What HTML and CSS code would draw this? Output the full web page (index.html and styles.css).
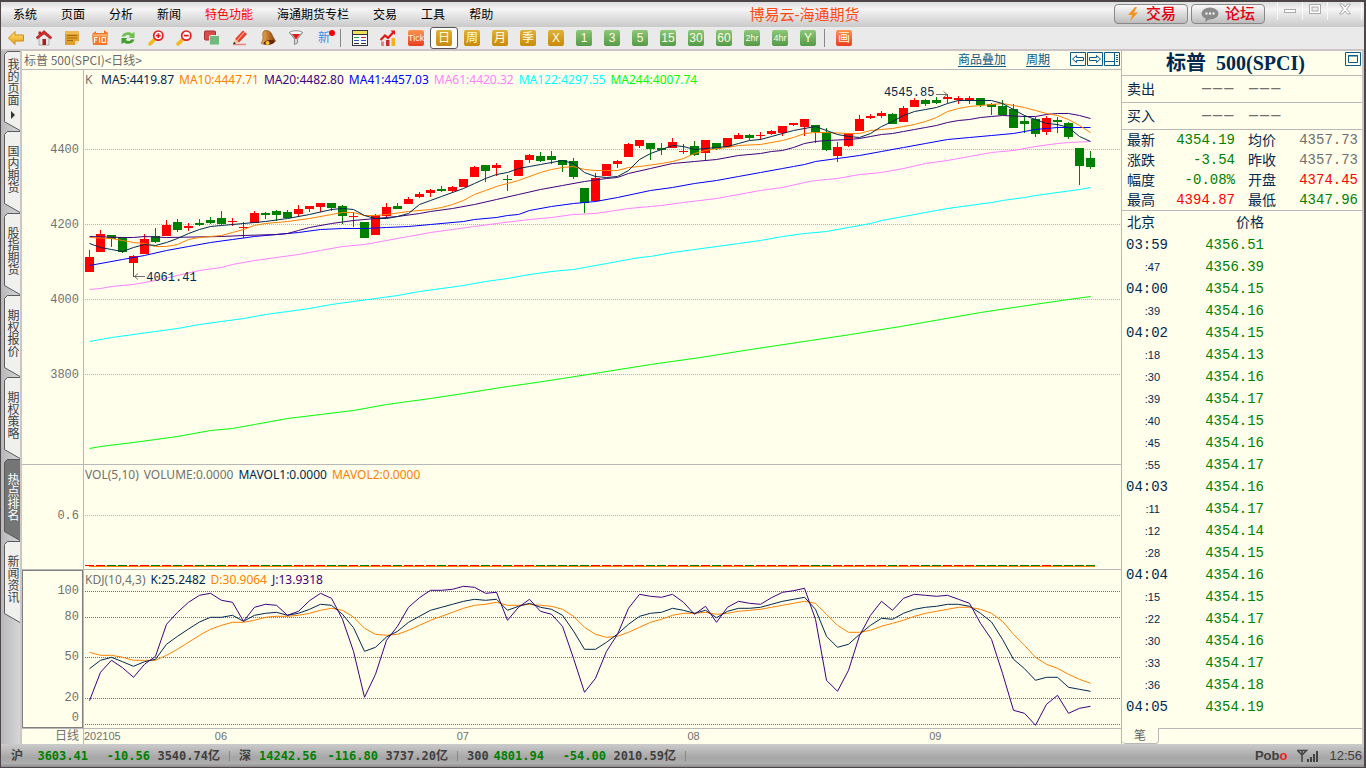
FILE: index.html
```html
<!DOCTYPE html>
<html lang="zh-CN">
<head>
<meta charset="utf-8">
<title>博易云-海通期货</title>
<link rel="stylesheet" href="styles.css">
</head>
<body>
<svg class="defs" aria-hidden="true">
  <defs>
    <linearGradient id="gold" x2="0" y2="1"><stop offset="0" stop-color="#ffe27a"/><stop offset="1" stop-color="#e8a010"/></linearGradient>
    <linearGradient id="bell" x2="1" y2="0"><stop offset="0" stop-color="#f0b050"/><stop offset="1" stop-color="#8a3c08"/></linearGradient>
    <symbol id="tab" viewBox="0 0 17 82" preserveAspectRatio="none">
      <path d="M17 .5H3.500L.5 3.500V72.500L17 81.500"/>
    </symbol>
  </defs>
</svg>

<header class="titlebar">
  <nav class="menu">
    <button>系统</button><button>页面</button><button>分析</button><button>新闻</button><button class="hot">特色功能</button><button>海通期货专栏</button><button>交易</button><button>工具</button><button>帮助</button>
  </nav>
  <h1 class="app-name">博易云-海通期货</h1>
  <div class="title-right">
    <button class="pill"><svg width="14" height="16" viewBox="0 0 14 16"><path d="M9 1L2 9h4l-2 6 8-8.500H8L11 1z" fill="#f5941e"/></svg>交易</button>
    <button class="pill"><svg width="18" height="15" viewBox="0 0 18 15"><ellipse cx="9" cy="6.500" rx="8.500" ry="6" fill="#8a8a8a"/><path d="M5 10l-1 5 6-4z" fill="#8a8a8a"/><path d="M4.500 5.500h2v2h-2zM8 5.500h2v2H8zM11.500 5.500h2v2h-2z" fill="#fff"/></svg>论坛</button>
    <div class="window-controls">
      <button aria-label="最小化"><svg width="14" height="14" viewBox="0 0 14 14"><rect x="1.500" y="7.500" width="11" height="3" fill="#fff" stroke="#aaa"/></svg></button>
      <button aria-label="还原"><svg width="14" height="14" viewBox="0 0 14 14"><rect x="1.500" y="2.500" width="11" height="9" fill="#fff" stroke="#aaa"/><rect x="4" y="5" width="6" height="4" fill="#eee" stroke="#aaa"/></svg></button>
      <button class="close" aria-label="关闭"><svg width="14" height="14" viewBox="0 0 14 14"><path d="M1.500 2h3L7 5l2.500-3h3L8.700 7l3.800 5h-3L7 9l-2.500 3h-3l3.800-5z" fill="#fff" stroke="#aaa"/></svg></button>
    </div>
  </div>
</header>

<div class="toolbar">
  <button aria-label="后退"><svg viewBox="0 0 16 16"><path d="M.5 8L7 1.500V5h8.500v6H7v3.500z" fill="url(#gold)" stroke="#d08c10"/></svg></button>
  <button aria-label="首页"><svg viewBox="0 0 16 16"><path d="M3 7v8h10V7L8 3z" fill="#e8e8ea" stroke="#888" stroke-width=".6"/><path d="M2.500 1.500h2.500v3H2.500z" fill="#b22"/><path d="M8 .5L0 7.500l1.500 1.500L8 4l6.500 5L16 7.500z" fill="#d62828" stroke="#901515" stroke-width=".5"/><path d="M6.500 9h3.500v6H6.500z" fill="#a51d1d"/></svg></button>
  <button aria-label="公告"><svg viewBox="0 0 16 16"><path d="M1 1h14v10l-4 4H1z" fill="#e0a030"/><path d="M1 1h14v3H1z" fill="#edbb55"/><path d="M11 15v-4h4z" fill="#fbe09a"/><path d="M3 5.500h10M3 8h10M3 10.500h6" stroke="#a86c10"/></svg></button>
  <button aria-label="F10"><svg viewBox="0 0 16 16"><path d="M0 4l4-3v2h8V0l4 3-1 12H1z" fill="#f07828"/><path d="M.5 4h15v2.500H.5z" fill="#f8a868"/><path d="M2.500 13V7.500H5.500M2.500 10H5M7.500 7v6M10 7.500h3.500V12.500H10z" fill="none" stroke="#fff5dc" stroke-width="1.200"/></svg></button>
  <button aria-label="刷新"><svg viewBox="0 0 16 16"><path d="M1.500 6.500C3 2 9 1 12 3.500l2.500-1.500V8H8.500l2-2C8 4.500 5.500 4.500 5 6.500z" fill="#6cc24a"/><path d="M14.500 9.500C13 14 7 15 4 12.500L1.500 14V8h6l-2 2c2.500 1.500 5 1.500 5.500-.5z" fill="#3f9e2c"/></svg></button>
  <button aria-label="放大"><svg viewBox="0 0 16 16"><path d="M6.500 9.500L2 14" stroke="#f5b820" stroke-width="3.500" stroke-linecap="round"/><circle cx="10.300" cy="5.600" r="4.600" fill="#fff" stroke="#e02020" stroke-width="1.700"/><path d="M10.300 3.200v4.800M8 5.600h4.700" stroke="#e02020" stroke-width="1.600"/></svg></button>
  <button aria-label="缩小"><svg viewBox="0 0 16 16"><path d="M6.500 9.500L2 14" stroke="#f5b820" stroke-width="3.500" stroke-linecap="round"/><circle cx="10.300" cy="5.600" r="4.600" fill="#fff" stroke="#e02020" stroke-width="1.700"/><path d="M8 5.600h4.700" stroke="#e02020" stroke-width="1.800"/></svg></button>
  <button aria-label="叠加"><svg viewBox="0 0 16 16"><rect x=".5" y="1" width="11" height="9" rx="1" fill="#d94a4a" stroke="#a83030"/><rect x="5.500" y="5.500" width="10" height="9.500" rx="1" fill="#74b77c" stroke="#e0f0e0"/></svg></button>
  <button aria-label="画线"><svg viewBox="0 0 16 16"><path d="M1 14.500h13" stroke="#f08080" stroke-width="1.500"/><path d="M11 .5l4 3.500-8 8.500-4-3.500z" fill="#e83a24"/><path d="M12.500 2L5 10.500" stroke="#ff9a80" stroke-width="1.300"/><path d="M3 9l4 3.500L1 14.500z" fill="#f0c898"/><path d="M2 11.700L1 14.500l3-.9z" fill="#333"/></svg></button>
  <button aria-label="预警"><svg viewBox="0 0 16 16"><path d="M4 1c6-2 8 3 9 6l2.500 4c-3 4-9 4.500-14 2.500C.5 12.500 3 11 3 8.500S2 2.500 4 1z" fill="url(#bell)" stroke="#804010" stroke-width=".6"/><ellipse cx="9" cy="12.300" rx="5.500" ry="2.200" transform="rotate(-10 9 12.300)" fill="#5e2806"/><circle cx="7.500" cy="13" r="2" fill="#ffc030"/></svg></button>
  <button aria-label="筛选"><svg viewBox="0 0 16 16"><path d="M1.500 2.500L6.500 9v5.500l3-1.500V9l5-6.500z" fill="#d8d8da" stroke="#8a8a8a"/><ellipse cx="8" cy="2.800" rx="6.500" ry="2" fill="#fff" stroke="#888"/><path d="M4 4h8L8.500 9h-1z" fill="#e02020"/></svg></button>
  <button class="new-item">新<i class="dot"></i></button>
  <span class="sep"></span>
  <button aria-label="报价表"><svg viewBox="0 0 16 16"><rect x=".5" y=".5" width="15" height="15" fill="#fff" stroke="#333"/><path d="M1 1h14v3H1z" fill="#f2e058"/><path d="M0 4.500h16" stroke="#333"/><path d="M2 7.500h5" stroke="#20a040"/><path d="M9 7.500h5" stroke="#e02020"/><path d="M2 10.500h5M9 10.500h5" stroke="#2a50c8"/><path d="M2 13.500h5M9 13.500h5" stroke="#333"/></svg></button>
  <button aria-label="分时走势"><svg viewBox="0 0 16 16"><path d="M1 11.500h3V16H1z" fill="#f08080"/><path d="M6 10h3.500v6H6z" fill="#c03030"/><path d="M11.500 8H15v8h-3.500z" fill="#f5b020"/><path d="M.5 10L5 5.500l3 2.500L14 1.500" stroke="#e01818" stroke-width="2.200" fill="none"/><path d="M10.500.5H15v4.500z" fill="#e01818"/></svg></button>
  <button><span class="chip red narrow">Tick</span></button>
  <button class="selected"><span class="chip gold">日</span></button>
  <button><span class="chip gold">周</span></button>
  <button><span class="chip gold">月</span></button>
  <button><span class="chip gold">季</span></button>
  <button><span class="chip gold">X</span></button>
  <button><span class="chip green">1</span></button>
  <button><span class="chip green">3</span></button>
  <button><span class="chip green">5</span></button>
  <button><span class="chip green">15</span></button>
  <button><span class="chip green">30</span></button>
  <button><span class="chip green">60</span></button>
  <button><span class="chip green narrow">2hr</span></button>
  <button><span class="chip green narrow">4hr</span></button>
  <button><span class="chip green">Y</span></button>
  <span class="sep"></span>
  <button><span class="chip red">画</span></button>
</div>

<main class="workspace">
  <nav class="side-tabs">
    <button class="side-tab"><svg><use href="#tab"/></svg><span>我的页面</span><i class="more"></i></button>
    <button class="side-tab"><svg><use href="#tab"/></svg><span>国内期货</span></button>
    <button class="side-tab"><svg><use href="#tab"/></svg><span>股指期货</span></button>
    <button class="side-tab"><svg><use href="#tab"/></svg><span>期权报价</span></button>
    <button class="side-tab"><svg><use href="#tab"/></svg><span>期权策略</span></button>
    <button class="side-tab active"><svg><use href="#tab"/></svg><span>热点排名</span></button>
    <button class="side-tab"><svg><use href="#tab"/></svg><span>新闻资讯</span></button>
  </nav>

  <section class="chart">
    <div class="chart-head">
      <span class="chart-title">标普 500(SPCI)&lt;日线&gt;</span>
      <a href="#overlay">商品叠加</a>
      <a href="#period">周期</a>
      <div class="head-icons">
        <button aria-label="左移"><svg viewBox="0 0 16 14"><path d="M.5.5h15v13H.5z"/><path d="M2.500 7L6.500 3.500V5.500H13.500V8.500H6.500V10.500z"/></svg></button>
        <button aria-label="右移"><svg viewBox="0 0 16 14"><path d="M.5.5h15v13H.5z"/><path d="M13.500 7L9.500 3.500V5.500H2.500V8.500H9.500V10.500z"/></svg></button>
        <button aria-label="布局"><svg viewBox="0 0 16 14"><path d="M.5.5h15v13H.5zM10.500 1v12M1 9.500h9M12 3.500h2M12 5.500h2M12 7.500h2M12 9.500h2"/></svg></button>
      </div>
    </div>

    <div class="panel">
      <div class="axis price-axis"><span>4400</span><span>4200</span><span>4000</span><span>3800</span></div>
      <div class="plot">
        <svg id="price" viewBox="84 70 1037 394" preserveAspectRatio="none"></svg>
        <div class="legend price-legend"><span class="c-gray">K</span><span class="c-navy">MA5:4419.87</span><span class="c-orange">MA10:4447.71</span><span class="c-purple">MA20:4482.80</span><span class="c-blue">MA41:4457.03</span><span class="c-pink">MA61:4420.32</span><span class="c-cyan">MA122:4297.55</span><span class="c-lime">MA244:4007.74</span></div>
        <span class="mark low">4061.41</span>
        <span class="mark high">4545.85</span>
      </div>
    </div>

    <div class="panel">
      <div class="axis vol-axis"><span>0.6</span></div>
      <div class="plot">
        <svg id="volume" viewBox="84 465 1037 104" preserveAspectRatio="none"></svg>
        <div class="legend"><span class="c-gray">VOL(5,10)</span><span class="c-gray">VOLUME:0.0000</span><span class="c-navy">MAVOL1:0.0000</span><span class="c-orange">MAVOL2:0.0000</span></div>
      </div>
    </div>

    <div class="panel">
      <div class="axis kdj-axis"><span>100</span><span>80</span><span>50</span><span>20</span><span>0</span></div>
      <div class="plot">
        <svg id="kdj" viewBox="84 570 1037 158" preserveAspectRatio="none"></svg>
        <div class="legend"><span class="c-gray">KDJ(10,4,3)</span><span class="c-navy">K:25.2482</span><span class="c-orange">D:30.9064</span><span class="c-purple">J:13.9318</span></div>
      </div>
    </div>

    <div class="time-axis">
      <span class="period">日线</span>
      <div class="months"><span>202105</span><span>06</span><span>07</span><span>08</span><span>09</span></div>
    </div>
  </section>

  <aside class="quote">
    <div class="quote-title"><h2>标普 &nbsp;500(SPCI)</h2><button aria-label="最大化"><svg viewBox="0 0 16 14"><path d="M.5.5h15v13H.5zM3.500 3.500h9v7h-9zM3 4h10"/></svg></button></div>
    <div class="bid"><span>卖出</span><span class="dash">−−−</span><span class="dash">−−−</span></div>
    <div class="bid"><span>买入</span><span class="dash">−−−</span><span class="dash">−−−</span></div>
    <dl class="stats">
      <dt>最新</dt><dd class="down">4354.19</dd><dt>均价</dt><dd class="flat">4357.73</dd>
      <dt>涨跌</dt><dd class="down">-3.54</dd><dt>昨收</dt><dd class="flat">4357.73</dd>
      <dt>幅度</dt><dd class="down">-0.08%</dd><dt>开盘</dt><dd class="up">4374.45</dd>
      <dt>最高</dt><dd class="up">4394.87</dd><dt>最低</dt><dd class="down">4347.96</dd>
    </dl>
    <table class="ticks">
      <thead><tr><th>北京</th><th>价格</th></tr></thead>
      <tbody>
        <tr><td>03:59</td><td>4356.51</td></tr>
        <tr><td class="s">:47</td><td>4356.39</td></tr>
        <tr><td>04:00</td><td>4354.15</td></tr>
        <tr><td class="s">:39</td><td>4354.16</td></tr>
        <tr><td>04:02</td><td>4354.15</td></tr>
        <tr><td class="s">:18</td><td>4354.13</td></tr>
        <tr><td class="s">:30</td><td>4354.16</td></tr>
        <tr><td class="s">:39</td><td>4354.17</td></tr>
        <tr><td class="s">:40</td><td>4354.15</td></tr>
        <tr><td class="s">:45</td><td>4354.16</td></tr>
        <tr><td class="s">:55</td><td>4354.17</td></tr>
        <tr><td>04:03</td><td>4354.16</td></tr>
        <tr><td class="s">:11</td><td>4354.17</td></tr>
        <tr><td class="s">:12</td><td>4354.14</td></tr>
        <tr><td class="s">:28</td><td>4354.15</td></tr>
        <tr><td>04:04</td><td>4354.16</td></tr>
        <tr><td class="s">:15</td><td>4354.15</td></tr>
        <tr><td class="s">:22</td><td>4354.17</td></tr>
        <tr><td class="s">:30</td><td>4354.16</td></tr>
        <tr><td class="s">:33</td><td>4354.17</td></tr>
        <tr><td class="s">:36</td><td>4354.18</td></tr>
        <tr><td>04:05</td><td>4354.19</td></tr>
      </tbody>
    </table>
    <div class="quote-tabs"><button>笔</button><span></span></div>
  </aside>
</main>

<footer class="status">
  <div class="index"><span>沪</span><b>3603.41</b><b>-10.56</b><span>3540.74亿</span></div>
  <div class="index"><span>深</span><b>14242.56</b><b>-116.80</b><span>3737.20亿</span></div>
  <div class="index"><span>300</span><b>4801.94</b><b>-54.00</b><span>2010.59亿</span></div>
  <div class="status-right">
    <span class="brand">Pob<em>o</em></span>
    <svg width="22" height="14" viewBox="0 0 22 14"><path d="M.5 1.500H9.500L5 6zM5 1v12" fill="none" stroke="#444" stroke-width="1.500"/><path d="M10 10h2v3h-2zM13 8h2v5h-2zM16 5h2v8h-2zM19 2h2v11h-2z" fill="#444"/></svg>
    <time>12:56</time>
  </div>
</footer>
<script src="chart.js"></script>
</body>
</html>
```
FILE: styles.css
```css
* { box-sizing: border-box; }

body {
  margin: 0;
  height: 100vh;
  display: flex;
  flex-direction: column;
  border: solid #4c4648;
  border-width: 2px 2px 1px 1px;
  background: #c8c8ca;
  color: #000;
  font: 12px/16px "Liberation Sans", "Noto Sans CJK SC", sans-serif;
  overflow: hidden;
}

button {
  margin: 0;
  padding: 0;
  border: 0;
  background: none;
  color: inherit;
  font: inherit;
}

h1, h2, dl, dd { margin: 0; }
i, em { font-style: normal; }
svg { display: block; }
.defs { position: absolute; width: 0; height: 0; }

/* Title bar */
.titlebar {
  flex: none;
  display: grid;
  grid-template-columns: 1fr auto 1fr;
  height: 25px;
  background: linear-gradient(#dedede, #f4f4f4 30%, #c9c9c9);
}
.menu { display: flex; white-space: nowrap; }
.menu button { padding: 0 12px; }
.menu .hot { color: #f00; }
.app-name {
  width: 110px;
  margin-left: 244px;
  color: #ff4a10;
  font-size: 15px;
  font-weight: 400;
  line-height: 25px;
  white-space: nowrap;
}
.title-right { display: flex; justify-content: flex-end; align-items: flex-start; gap: 3px; }
.pill {
  display: flex;
  align-items: center;
  justify-content: center;
  gap: 6px;
  width: 74px;
  height: 20px;
  margin-top: 2px;
  border: 1px solid #888;
  border-radius: 4px;
  background: linear-gradient(#fafafa, #bdbdbd);
  color: #e00010;
  font-size: 15px;
  font-weight: 500;
}
.window-controls { display: flex; margin-left: 9px; padding-right: 2px; }
.window-controls button {
  display: grid;
  justify-items: center;
  width: 25px;
  height: 18px;
  border-left: 1px solid #f8f8f8;
}
.window-controls .close { width: 35px; border-right: 1px solid #f8f8f8; }

/* Toolbar */
.toolbar {
  flex: none;
  display: flex;
  height: 24px;
  padding-left: 1px;
  border-bottom: 2px solid #cdc5c5;
  background: #eaeaea;
}
.toolbar button {
  display: grid;
  place-items: center;
  width: 28px;
  height: 22px;
}
.toolbar svg { width: 16px; height: 16px; }
.toolbar .selected { border: 1px solid #555; border-radius: 3px; background: #fff; }
.sep { width: 8px; padding: 2px 0; }
.sep::before { content: ""; display: block; width: 1px; height: 18px; margin-left: 2px; background: #888; }
.new-item { position: relative; color: #3a8ee6; }
.dot { position: absolute; top: 3px; right: 3px; width: 6px; height: 6px; border-radius: 50%; background: #f00; }
.chip {
  width: 16px;
  height: 16px;
  border-radius: 2px;
  color: #fffbe0;
  font-size: 12px;
  line-height: 16px;
  text-align: center;
}
.chip.gold { background: linear-gradient(#dfb23a, #c88a08); }
.chip.green { background: linear-gradient(#8cc878, #559a48); }
.chip.red { background: linear-gradient(#ff9450, #ea3c20); }
.chip.narrow { font-size: 9px; }

/* Workspace */
.workspace {
  flex: 1;
  min-height: 0;
  display: grid;
  grid-template-rows: minmax(0, 1fr);
  grid-template-columns: 21px minmax(0, 1fr) 243px;
}

.side-tabs {
  padding-left: 3px;
  border-right: 2px solid #cdc5c5;
  background: linear-gradient(90deg, #b8b8ba, #d6d6d8);
}
.side-tab {
  position: relative;
  display: block;
  width: 16px;
  height: 82px;
  color: #404040;
  fill: #f0f0ee;
  stroke: #555;
}
.side-tab svg { position: absolute; inset: 0; width: 16px; height: 100%; }
.side-tab span {
  position: absolute;
  top: 14px;
  left: 1px;
  writing-mode: vertical-rl;
  line-height: 13px;
}
.side-tab:first-child { height: 80px; }
.side-tab:first-child span { top: 7px; }
.side-tab.active { color: #fff; fill: #757575; }
.more {
  position: absolute;
  top: 60px;
  left: 7px;
  border: 4px solid transparent;
  border-left-color: #333;
  border-right: 0;
}

/* Chart */
.chart {
  display: grid;
  grid-template-rows: 19px minmax(0, 395fr) minmax(0, 105fr) minmax(0, 159fr) 15px;
  min-height: 0;
  background: #ffffec;
}
.chart-head {
  display: flex;
  gap: 20px;
  padding: 0 1px 0 2px;
  border-bottom: 1px solid #b8b8b8;
  color: #6a6a6a;
  line-height: 18px;
}
.chart-title { margin-right: auto; font-family: "Noto Sans CJK SC", sans-serif; }
.chart-head a { color: #0a5a8a; text-underline-offset: 2px; }
.head-icons { display: flex; gap: 1px; }
.head-icons button, .quote-title button { width: 16px; height: 14px; margin-top: 1px; }
.head-icons svg, .quote-title svg { width: 16px; height: 14px; fill: none; stroke: #0a5a8a; }
.panel {
  display: grid;
  grid-template-rows: minmax(0, 1fr);
  grid-template-columns: 61px minmax(0, 1fr);
  min-height: 0;
  border-bottom: 1px solid #b8b8b8;
}
.axis {
  display: grid;
  padding-right: 4px;
  color: #707070;
  font: 12px/14px "Liberation Mono", monospace;
  text-align: right;
  align-items: center;
}
.price-axis { grid-template-rows: repeat(4, minmax(0, 1fr)); padding-top: 42px; padding-bottom: 52px; }
.vol-axis { padding-bottom: 2px; }
.kdj-axis {
  grid-template-rows: minmax(0, 26fr) minmax(0, 26fr) minmax(0, 54fr) minmax(0, 28fr) minmax(0, 11fr);
  padding: 7px 3px 4px 0;
  border: 1px solid #808080;
}
.plot { position: relative; min-height: 0; border-left: 1px solid #b8b8b8; }
.plot svg { position: absolute; inset: 0; width: 100%; height: 100%; }
.legend {
  position: relative;
  display: flex;
  gap: 5px;
  padding: 3px 0 0 1px;
  font: 12px/14px "Noto Sans", sans-serif;
  white-space: nowrap;
}
.price-legend .c-gray { width: 11px; }
.mark { position: absolute; color: #002850; font: 12px/14px "Liberation Mono", monospace; }
.low { left: 6%; top: 51%; }
.high { right: 18%; top: 4%; }

.c-gray { color: #707070; }
.c-navy { color: #002850; }
.c-orange { color: #ff8000; }
.c-purple { color: #400080; }
.c-blue { color: #00f; }
.c-pink { color: #ff80ff; }
.c-cyan { color: #0ff; }
.c-lime { color: #0f0; }

.grid { stroke: #b4b4ac; stroke-dasharray: 1 1; shape-rendering: crispEdges; }
.grid.dark { stroke: #707070; }
.candles { shape-rendering: crispEdges; }
.rise { fill: #f00; }
.fall { fill: #008000; }
.line { fill: none; stroke: currentColor; stroke-width: 1; vector-effect: non-scaling-stroke; }
.arrow { fill: none; stroke: #707070; }

.time-axis {
  display: grid;
  grid-template-columns: 61px minmax(0, 1fr);
  color: #707070;
  font-size: 11px;
  line-height: 14px;
}
.period { padding-right: 4px; font-size: 12px; text-align: right; }
.months {
  display: grid;
  grid-template-columns: 131fr 242fr 231fr 242fr 192fr;
  border-left: 1px solid #b8b8b8;
}

/* Quote panel */
.quote {
  display: flex;
  flex-direction: column;
  min-height: 0;
  border-left: 1px solid #b8b8b8;
  border-right: 2px solid #cdc5c5;
  background: #ffffec;
  color: #002850;
  font-size: 14px;
}
.quote-title {
  display: grid;
  grid-template-columns: 1fr 16px;
  height: 25px;
  padding-right: 1px;
  border-bottom: 1px solid #b8b8b8;
}
.quote-title h2 {
  padding-left: 4px;
  font: 700 20px/24px "Liberation Serif", "Noto Sans CJK SC", serif;
  text-align: center;
}
.bid {
  display: grid;
  grid-template-columns: 74px 47px 1fr;
  height: 27px;
  padding-left: 5px;
  border-bottom: 1px solid #b8b8b8;
  line-height: 26px;
}
.dash { color: #707070; font-size: 19px; }
.stats {
  display: grid;
  grid-template-columns: 36px 72px 50px 1fr;
  height: 81px;
  padding: 0 4px 0 5px;
  border-bottom: 1px solid #b8b8b8;
  line-height: 20px;
}
.stats dt:nth-of-type(even) { padding-left: 13px; }
.stats dd, .ticks td { font-family: "Liberation Mono", monospace; text-align: right; }
.up { color: #f00; }
.down { color: #008000; }
.flat { color: #707070; }
.ticks { width: 142px; border-collapse: collapse; margin-bottom: auto; }
.ticks tr { height: 22px; }
.ticks th { padding: 0 0 0 5px; font-weight: 400; text-align: left; }
.ticks th:last-child { padding: 0; text-align: right; }
.ticks td { padding: 1px 0 0; color: #008000; }
.ticks td:first-child { width: 46px; color: #002850; }
.ticks td.s { padding-right: 8px; font: 11px/14px "Liberation Sans", sans-serif; }
.quote-tabs { display: grid; grid-template-columns: 37px 1fr; height: 16px; }
.quote-tabs button {
  border: 1px solid #b8b8b8;
  border-width: 0 1px 1px 0;
  border-radius: 0 0 4px 4px;
  color: #606060;
  font-size: 12px;
  line-height: 14px;
}
.quote-tabs span { border-top: 1px solid #b8b8b8; }

/* Status bar */
.status {
  flex: none;
  display: flex;
  height: 23px;
  padding-left: 1px;
  background: linear-gradient(#cbcbcb, #a6a6a6 60%, #aeaeae 85%, #8c8c8c);
  color: #404040;
  font: 700 12px/24px "DejaVu Sans Mono", "Noto Sans CJK SC", monospace;
}
.index {
  position: relative;
  display: grid;
  grid-template-columns: 20px 57px 62px 70px;
  width: 228px;
  padding-left: 9px;
  white-space: nowrap;
}
.index::after { content: ""; position: absolute; right: 0; top: 7px; height: 10px; border-right: 1px solid #888; }
.index > :not(:first-child) { text-align: right; }
.index b { color: #008000; }
.status-right {
  display: flex;
  align-items: center;
  gap: 10px;
  margin-left: auto;
  padding-right: 2px;
  font: 13px/23px "Liberation Sans", sans-serif;
}
.brand { font-weight: 700; }
.brand em { color: #f02020; }
```
FILE: chart.js
```js
const NS = "http://www.w3.org/2000/svg";
const STEP = 11;
const FIRST = 85;

function add(svg, name, attrs) {
  const el = document.createElementNS(NS, name);
  for (const key in attrs) el.setAttribute(key, attrs[key]);
  svg.appendChild(el);
}

// One candle per entry: direction, high, body top, body bottom, low.
const candles = `r250,257,272,272 r230,234,252,252 g235,235,239,247 g237,237,252,253 r255,256,263,277
r234,239,254,254 g228,236,242,243 r220,225,236,236 g219,222,230,232 r223,226,228,231
g219,223,225,226 g217,220,223,224 g211,218,224,225 r218,221,222,226 r222,227,228,238
r211,213,223,223 g212,213,215,219 g210,211,215,221 g210,212,218,218 r205,209,214,217
r206,206,209,212 r203,203,207,212 g203,203,208,211 g205,206,216,224 r212,216,217,227
g222,222,238,238 r214,215,235,235 r203,207,216,217 g203,206,209,209 r197,199,204,204
r192,194,197,198 r189,190,193,197 g186,189,191,192 r186,187,191,192 r179,179,187,187
r166,167,177,177 g165,165,171,182 r163,165,168,176 g175,179,180,191 r160,160,176,176
r154,155,160,163 g152,156,161,162 g151,156,160,164 g160,160,165,172 g158,161,177,179
g188,188,203,213 r173,178,201,202 r164,164,176,176 r160,161,164,168 r143,144,157,157
r140,140,146,148 g143,143,149,160 g143,148,150,155 r138,142,148,148 r144,151,152,154
g141,146,155,156 r140,140,153,160 g143,143,149,150 r138,138,147,147 r133,135,139,139
g134,135,138,140 r132,135,136,140 r130,131,134,135 r126,126,133,136 r123,123,125,126
r119,119,127,136 g125,125,132,143 g128,132,150,151 r142,147,156,162 r133,133,146,147
r115,119,131,131 r114,116,118,119 r111,113,116,118 g113,114,124,124 r106,108,122,122
r98,100,107,107 g99,100,104,106 g97,100,103,104 r94,97,99,103 r96,98,100,104
r96,98,100,104 g98,98,105,107 g103,104,107,115 g100,106,115,115 g104,109,128,128
g115,121,124,133 g117,119,134,137 r116,118,132,135 g117,120,122,133 g122,123,137,139
g148,148,166,185 g151,158,167,169`.split(/\s+/).map(s => [s[0], ...s.slice(1).split(",").map(Number)]);

const averages = {
  "c-lime": "89,448 100,446 133,442 155,439 177,436 210,430 232,428 254,424 287,418 320,414 353,410 386,404 408,401 430,398 463,393 507,386 529,383 562,378 600,372 650,364 700,357 750,349 810,340 850,334 900,326 940,319 980,312 1020,306 1068,299 1090,296",
  "c-cyan": "89,341 111,337 133,334 155,331 177,328 199,324 221,321 243,318 265,314 287,311 309,308 331,304 353,301 375,298 397,295 419,291 441,288 463,285 485,281 507,278 529,274 551,271 573,269 584,267 606,263 639,257 650,256 672,252 694,249 716,246 738,243 760,240 782,236 804,233 826,231 848,227 870,223 881,220 903,216 925,212 947,208 969,205 991,202 1002,200 1024,197 1035,195 1057,192 1079,189 1090,187",
  "c-pink": "89,289 100,288 111,286 133,284 155,280 177,275 199,270 221,267 232,264 254,260 276,257 298,254 320,250 342,246 364,244 386,240 408,236 430,232 452,229 474,226 496,223 529,219 551,217 573,214 595,213 628,208 661,205 683,202 716,198 738,194 760,190 782,187 804,182 815,180 837,178 859,174 881,172 903,168 925,163 947,160 969,156 991,152 1013,150 1035,146 1057,143 1068,142 1090,141",
  "c-blue": "89,265 122,259 144,255 166,250 188,246 210,242 232,239 254,236 276,234 298,232 320,229 342,228 364,228 386,227 408,226 430,224 463,221 474,219 496,217 507,215 518,214 529,210 551,206 573,203 595,201 617,197 650,190 672,187 694,183 716,180 738,176 760,172 782,168 793,166 804,164 815,161 837,158 859,155 881,151 903,147 925,143 947,139 969,137 991,135 1013,133 1035,129 1057,127 1090,127",
  "c-purple": "89,236 122,237 133,237 144,236 166,237 221,236 243,235 276,234 287,233 298,230 309,227 331,223 353,220 375,218 397,216 419,213 430,211 452,208 474,204 496,199 518,194 540,189 562,185 584,181 606,178 617,177 628,173 650,168 672,163 694,161 716,159 738,155 760,153 771,151 782,150 793,147 804,143 815,141 826,140 848,139 859,138 870,136 881,134 892,133 903,131 914,129 925,127 936,125 947,122 958,120 969,119 980,117 991,116 1002,115 1024,116 1035,116 1046,114 1057,113 1068,113 1079,115 1090,118",
  "c-orange": "89,237 111,238 122,240 133,242 144,243 155,246 166,246 177,244 188,239 199,237 221,235 232,232 243,229 254,225 265,223 287,221 309,218 331,214 342,212 353,212 364,215 375,215 386,214 408,211 430,209 441,207 452,204 463,200 474,194 485,190 496,186 518,180 540,172 551,169 562,167 573,166 584,169 595,170 606,170 617,170 628,167 639,166 661,163 672,161 683,158 694,153 705,150 716,148 727,147 738,145 760,144 782,140 793,137 804,133 815,132 826,132 848,133 859,133 870,130 881,129 892,128 903,126 914,124 925,121 936,117 947,111 958,108 969,106 980,105 1002,103 1013,105 1024,107 1035,110 1046,113 1057,115 1068,119 1079,125 1090,132",
  "c-navy": "89,243 100,247 111,249 122,251 133,247 144,244 155,245 166,242 177,238 188,233 199,229 210,226 221,225 232,224 243,223 265,221 287,218 309,214 331,209 342,208 353,209 364,215 375,218 386,218 397,216 408,213 419,204 430,200 441,196 463,188 474,183 485,178 496,174 507,172 518,168 529,166 540,164 551,162 562,160 573,163 584,172 595,176 606,177 617,176 628,170 639,159 650,153 661,149 672,145 683,146 694,149 705,148 716,147 727,146 738,143 749,140 760,139 771,136 782,133 793,130 804,128 815,126 826,130 837,134 848,136 859,137 870,133 881,126 892,121 903,115 914,111 925,109 936,107 947,103 958,100 991,100 1002,103 1013,109 1024,115 1035,119 1046,123 1057,124 1068,127 1079,136 1090,141"
};

// Oscillator values in thirds of a pixel below the panel's origin, one per session.
const kdj = {
  "c-orange": [262,271,271,277,286,286,286,271,253,232,211,193,181,172,172,166,157,154,154,151,145,136,130,136,156,190,208,211,208,196,181,166,154,142,130,121,118,112,121,121,118,121,124,133,154,187,208,217,214,202,187,172,163,151,145,145,142,148,145,139,136,133,127,121,115,109,115,148,181,202,202,196,184,175,166,154,145,139,133,127,127,133,145,169,208,241,277,298,310,328,343,355],
  "c-navy": [311,286,277,290,304,290,283,238,214,192,171,157,157,151,169,151,145,142,151,145,133,118,121,148,188,259,247,216,199,172,154,136,127,118,109,103,106,103,136,124,115,127,133,151,198,253,253,232,207,178,154,145,142,130,136,145,136,158,139,130,130,127,118,109,103,97,133,214,247,238,208,181,160,163,145,133,127,124,118,118,124,145,171,223,283,311,346,337,337,367,373,379],
  "c-purple": [407,322,286,308,337,298,274,178,142,112,91,85,106,112,169,127,118,121,151,139,107,85,100,163,259,397,328,226,184,127,98,76,76,73,64,67,85,82,166,127,103,139,148,184,280,382,340,259,208,130,88,94,97,88,112,148,124,172,127,109,115,118,98,82,77,70,163,346,379,316,212,151,109,136,100,88,91,94,91,103,115,175,223,325,436,445,481,418,391,445,430,424]
};

const price = document.getElementById("price");
const volume = document.getElementById("volume");
const osc = document.getElementById("kdj");

for (const y of [149, 224, 299, 374]) add(price, "path", { class: "grid", d: `M85 ${y}.5H1121` });
add(volume, "path", { class: "grid", d: "M85 515.5H1121" });
for (const y of [591, 617, 657, 698, 724]) add(osc, "path", { class: "grid dark", d: `M85 ${y}.5H1121` });

candles.forEach(([dir, high, top, bottom, low], i) => {
  const x = FIRST + STEP * i;
  const cls = "candles " + (dir === "r" ? "rise" : "fall");
  add(price, "path", { class: cls, d: `M${x} ${top}h9V${bottom}h-9zM${x + 4} ${high}h1V${low}h-1z` });
  add(volume, "path", { class: cls, d: `M${x} 565h9v1h-9z` });
});

for (const cls in averages) {
  add(price, "polyline", { class: "line " + cls, points: averages[cls], transform: "translate(.5 .5)" });
}
add(volume, "path", { class: "line c-orange", d: "M89 566.5H1095" });
for (const cls in kdj) {
  const points = kdj[cls].map((v, i) => `${FIRST + 4.5 + STEP * i},${(565 + v / 3).toFixed(1)}`).join(" ");
  add(osc, "polyline", { class: "line " + cls, points });
}

add(price, "path", { class: "arrow", d: "M134 276.5H145M138 273.5L134.500 276.500L138 279.500" });
add(price, "path", { class: "arrow", d: "M936 94.5H947M943.500 91.500L947 94.500L943.500 97.500" });
```
